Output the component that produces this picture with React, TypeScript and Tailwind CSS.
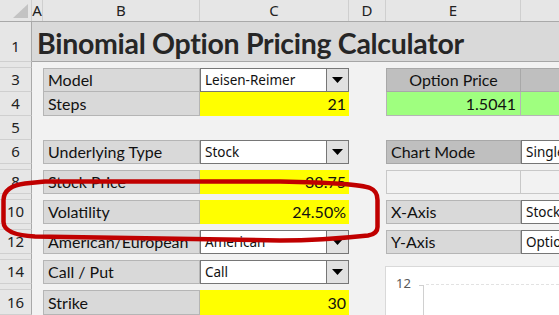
import React from "react";

const label = "font-['Lato',sans-serif] text-[16px] text-[#111]";

function RowHead({ n, h = "h-[24px]" }: { n?: string; h?: string }) {
  return (
    <div
      className={`${h} w-[32px] shrink-0 flex items-center justify-center border-r border-b border-r-[#a9a9a9] border-b-[#cfcfcf] bg-[#e6e6e6] font-['Noto_Sans',sans-serif] text-[15px] text-[#222] leading-none`}
    >
      {n}
    </div>
  );
}

function Arrow() {
  return (
    <svg width="11" height="6" viewBox="0 0 11 6">
      <polygon points="0,0 11,0 5.5,6" fill="#000" />
    </svg>
  );
}

function Dropdown({ value, button = true }: { value: string; button?: boolean }) {
  return (
    <div className="flex h-full w-full border border-[#767676] bg-white">
      <div className="flex-1 flex items-center pl-[4px] overflow-hidden whitespace-nowrap font-['Noto_Sans',sans-serif] text-[13.5px] text-[#111]">
        {value}
      </div>
      {button && (
        <div className="w-[22px] shrink-0 flex items-center justify-center border-l border-[#767676] bg-[#e1e1e1]">
          <Arrow />
        </div>
      )}
    </div>
  );
}

function Spacer() {
  return (
    <div className="flex h-[6px]">
      <RowHead h="h-[6px]" />
      <div className="flex-1" />
    </div>
  );
}

export default function App() {
  return (
    <div className="relative w-[559px] h-[315px] overflow-hidden bg-[#f2f2f2]">
      {/* column headers */}
      <div className="flex h-[22px] border-b border-[#a9a9a9] bg-[#e6e6e6] font-['Noto_Sans',sans-serif] text-[15px] text-[#222]">
        <div className="w-[32px] shrink-0 border-r border-[#cfcfcf] relative">
          <svg className="absolute left-0 top-0" width="32" height="22">
            <polygon points="28,4 28,18 13,18" fill="#c3c3c3" />
          </svg>
        </div>
        <div className="w-[11px] shrink-0 border-r border-[#cfcfcf] flex items-center justify-center">A</div>
        <div className="w-[157px] shrink-0 border-r border-[#cfcfcf] flex items-center justify-center">B</div>
        <div className="w-[149px] shrink-0 border-r border-[#cfcfcf] flex items-center justify-center">C</div>
        <div className="w-[37px] shrink-0 border-r border-[#cfcfcf] flex items-center justify-center">D</div>
        <div className="w-[135px] shrink-0 border-r border-[#cfcfcf] flex items-center justify-center">E</div>
        <div className="flex-1" />
      </div>

      {/* row 1 title */}
      <div className="flex h-[40px]">
        <div className="h-[40px] w-[32px] shrink-0 flex items-end justify-center pb-[7px] border-r border-b border-r-[#a9a9a9] border-b-[#cfcfcf] bg-[#e6e6e6] font-['Noto_Sans',sans-serif] text-[15px] text-[#222] leading-none">
          1
        </div>
        <div className="flex-1 flex items-end pl-[5px] pb-[4px] bg-[#d9d9d9] border-b border-[#a6a6a6] font-['Lato',sans-serif] font-bold text-[28.5px] leading-none tracking-[-0.3px] text-[#262626] whitespace-nowrap">
          Binomial Option Pricing Calculator
        </div>
      </div>
      <Spacer />

      {/* row 3 */}
      <div className="flex h-[24px]">
        <RowHead n="3" />
        <div className="w-[11px] shrink-0" />
        <div className={`w-[157px] shrink-0 flex items-center pl-[4px] bg-[#d9d9d9] border border-[#b5b5b5] ${label}`}>Model</div>
        <div className="w-[149px] shrink-0">
          <Dropdown value="Leisen-Reimer" />
        </div>
        <div className="w-[37px] shrink-0" />
        <div className={`w-[135px] shrink-0 flex items-center justify-center bg-[#bfbfbf] border border-[#a8a8a8] ${label}`}>Option Price</div>
        <div className="flex-1 bg-[#bfbfbf] border-y border-[#a8a8a8]" />
      </div>

      {/* row 4 */}
      <div className="flex h-[24px]">
        <RowHead n="4" />
        <div className="w-[11px] shrink-0" />
        <div className={`w-[157px] shrink-0 flex items-center pl-[4px] bg-[#d9d9d9] border-x border-b border-[#b5b5b5] ${label}`}>Steps</div>
        <div className={`w-[149px] shrink-0 flex items-center justify-end pr-[3px] bg-[#ffff00] ${label}`}>21</div>
        <div className="w-[37px] shrink-0" />
        <div className={`w-[135px] shrink-0 flex items-center justify-end pr-[4px] bg-[#9fff7f] border-x border-b border-[#b5b5b5] ${label}`}>1.5041</div>
        <div className="flex-1 bg-[#9fff7f] border-b border-[#b5b5b5]" />
      </div>

      {/* row 5 */}
      <div className="flex h-[24px]">
        <RowHead n="5" />
        <div className="flex-1" />
      </div>

      {/* row 6 */}
      <div className="flex h-[24px]">
        <RowHead n="6" />
        <div className="w-[11px] shrink-0" />
        <div className={`w-[157px] shrink-0 flex items-center pl-[4px] bg-[#d9d9d9] border border-[#b5b5b5] ${label}`}>Underlying Type</div>
        <div className="w-[149px] shrink-0">
          <Dropdown value="Stock" />
        </div>
        <div className="w-[37px] shrink-0" />
        <div className={`w-[135px] shrink-0 flex items-center pl-[4px] bg-[#bfbfbf] border border-[#a8a8a8] ${label}`}>Chart Mode</div>
        <div className="flex-1">
          <Dropdown value="Single" button={false} />
        </div>
      </div>
      <Spacer />

      {/* row 8 */}
      <div className="flex h-[24px]">
        <RowHead n="8" />
        <div className="w-[11px] shrink-0" />
        <div className={`w-[157px] shrink-0 flex items-center pl-[4px] bg-[#d9d9d9] border border-[#b5b5b5] ${label}`}>Stock Price</div>
        <div className={`w-[149px] shrink-0 flex items-center justify-end pr-[3px] bg-[#ffff00] ${label}`}>38.75</div>
        <div className="w-[37px] shrink-0" />
        <div className="w-[135px] shrink-0 border border-[#c8c8c8]" />
        <div className="flex-1 border-y border-[#c8c8c8]" />
      </div>
      <Spacer />

      {/* row 10 */}
      <div className="flex h-[24px]">
        <RowHead n="10" />
        <div className="w-[11px] shrink-0" />
        <div className={`w-[157px] shrink-0 flex items-center pl-[4px] bg-[#d9d9d9] border border-[#b5b5b5] ${label}`}>Volatility</div>
        <div className={`w-[149px] shrink-0 flex items-center justify-end pr-[3px] bg-[#ffff00] ${label}`}>24.50%</div>
        <div className="w-[37px] shrink-0" />
        <div className={`w-[135px] shrink-0 flex items-center pl-[4px] bg-[#d9d9d9] border border-[#b5b5b5] ${label}`}>X-Axis</div>
        <div className="flex-1">
          <Dropdown value="Stock" button={false} />
        </div>
      </div>
      <Spacer />

      {/* row 12 */}
      <div className="flex h-[24px]">
        <RowHead n="12" />
        <div className="w-[11px] shrink-0" />
        <div className={`w-[157px] shrink-0 flex items-center pl-[4px] bg-[#d9d9d9] border border-[#b5b5b5] ${label}`}>American/European</div>
        <div className="w-[149px] shrink-0">
          <Dropdown value="American" />
        </div>
        <div className="w-[37px] shrink-0" />
        <div className={`w-[135px] shrink-0 flex items-center pl-[4px] bg-[#d9d9d9] border border-[#b5b5b5] ${label}`}>Y-Axis</div>
        <div className="flex-1">
          <Dropdown value="Option Price" button={false} />
        </div>
      </div>
      <Spacer />

      {/* row 14 */}
      <div className="flex h-[24px]">
        <RowHead n="14" />
        <div className="w-[11px] shrink-0" />
        <div className={`w-[157px] shrink-0 flex items-center pl-[4px] bg-[#d9d9d9] border border-[#b5b5b5] ${label}`}>Call / Put</div>
        <div className="w-[149px] shrink-0">
          <Dropdown value="Call" />
        </div>
        <div className="flex-1" />
      </div>
      <Spacer />

      {/* row 16 */}
      <div className="flex h-[25px]">
        <RowHead n="16" h="h-[25px]" />
        <div className="w-[11px] shrink-0" />
        <div className={`w-[157px] shrink-0 flex items-center pl-[4px] bg-[#d9d9d9] border border-[#b5b5b5] ${label}`}>Strike</div>
        <div className={`w-[149px] shrink-0 flex items-center justify-end pr-[3px] bg-[#ffff00] ${label}`}>30</div>
        <div className="flex-1" />
      </div>

      {/* chart object */}
      <div className="absolute left-[385px] top-[266px] w-[200px] h-[60px] bg-white border border-[#d9d9d9]">
        <span className="absolute left-[10px] top-[10px] font-['Noto_Sans',sans-serif] text-[13px] leading-none text-[#595959]">12</span>
        <svg className="absolute left-0 top-0" width="200" height="60">
          <line x1="37.5" y1="18" x2="37.5" y2="60" stroke="#d0d0d0" strokeWidth="1" />
          <line x1="33" y1="18.5" x2="38" y2="18.5" stroke="#d0d0d0" strokeWidth="1" />
          <line x1="40" y1="17.5" x2="200" y2="17.5" stroke="#e2e2e2" strokeWidth="1" strokeDasharray="3 2" />
        </svg>
      </div>

      {/* red annotation */}
      <svg className="absolute left-0 top-0 pointer-events-none" width="559" height="315">
        <path
          d="M45 181.5 L280 181.5 C330 182.5 360 184 370 188 Q377.5 191 377.5 200 L377.5 227 Q377.5 234 368 235.5 C340 238.5 305 240.5 280 240.5 L35 236.5 Q4 235 3.5 222 L3.5 200 Q4 186 25 183.5 Z"
          fill="none"
          stroke="#c00000"
          strokeWidth="4.5"
          strokeLinejoin="round"
        />
      </svg>
    </div>
  );
}
